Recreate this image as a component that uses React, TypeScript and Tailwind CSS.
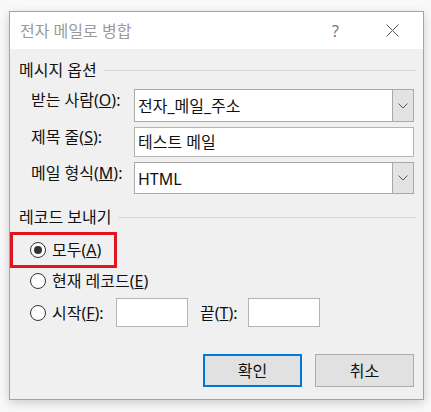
import React from "react";

const U = ({ c }: { c: string }) => <span className="underline underline-offset-[1px] decoration-1">{c}</span>;

const Chevron = () => (
  <svg width="10" height="6" viewBox="0 0 10 6" className="text-[#555]">
    <path d="M0.5 0.5 L5 5 L9.5 0.5" fill="none" stroke="currentColor" strokeWidth="1" />
  </svg>
);

const Radio = ({ checked }: { checked?: boolean }) => (
  <div className="w-[16px] h-[16px] rounded-full border border-[#333] bg-white flex items-center justify-center shrink-0">
    {checked && <div className="w-[8px] h-[8px] rounded-full bg-[#333]" />}
  </div>
);

export default function App() {
  return (
    <div className="w-[431px] h-[412px] bg-[#f9f9f9] pt-[11px] pl-[9px] font-['Noto_Sans','Noto_Sans_CJK_KR',sans-serif] text-[16px] leading-[20px] text-[#111]">
      <div className="w-[415px] h-[389px] border border-[#a3a3a3] shadow-[0_3px_10px_rgba(0,0,0,0.18)] flex flex-col">
        {/* Title bar */}
        <div className="h-[37px] bg-white flex items-center pl-[10px] shrink-0">
          <span className="text-[#9a9a9a]">전자 메일로 병합</span>
          <span className="ml-auto text-[#777] mr-[47px] text-[16px]">?</span>
          <svg width="13" height="13" viewBox="0 0 13 13" className="mr-[24px]">
            <path d="M0.5 0.5 L12.5 12.5 M12.5 0.5 L0.5 12.5" stroke="#555" strokeWidth="1" />
          </svg>
        </div>
        {/* Body */}
        <div className="flex-1 bg-[#f0f0f0] flex flex-col">
          {/* Section 1 header */}
          <div className="mt-[11px] h-[20px] flex items-center pl-[9px] pr-[7px]">
            <span>메시지 옵션</span>
            <div className="flex-1 h-px bg-[#dadada] ml-[7px]" />
          </div>
          {/* Row 1 */}
          <div className="mt-[9px] flex items-start pl-[21px] pr-[9px]">
            <div className="w-[103px] pt-[1px]">
              받는 사람(<U c="O" />):
            </div>
            <div className="flex-1 h-[33px] border border-[#a8a8a8] bg-white flex">
              <div className="flex-1 flex items-center pl-[3px]">전자_메일_주소</div>
              <div className="w-[21px] bg-[#e3e3e3] border-l border-[#a8a8a8] flex items-center justify-center">
                <Chevron />
              </div>
            </div>
          </div>
          {/* Row 2 */}
          <div className="mt-[5px] flex items-start pl-[21px] pr-[9px]">
            <div className="w-[103px] pt-[0px]">
              제목 줄(<U c="S" />):
            </div>
            <div className="flex-1 h-[30px] border border-[#b4b4b4] bg-white flex items-center pl-[3px]">
              테스트 메일
            </div>
          </div>
          {/* Row 3 */}
          <div className="mt-[5px] flex items-start pl-[21px] pr-[9px]">
            <div className="w-[103px] pt-[1px]">
              메일 형식(<U c="M" />):
            </div>
            <div className="flex-1 h-[32px] border border-[#a8a8a8] bg-white flex">
              <div className="flex-1 flex items-center pl-[3px] pt-[2px]">HTML</div>
              <div className="w-[21px] bg-[#e3e3e3] border-l border-[#a8a8a8] flex items-center justify-center">
                <Chevron />
              </div>
            </div>
          </div>
          {/* Section 2 header */}
          <div className="mt-[13px] h-[20px] flex items-center pl-[9px] pr-[7px]">
            <span>레코드 보내기</span>
            <div className="flex-1 h-px bg-[#dadada] ml-[7px]" />
          </div>
          {/* Radio: all (highlighted) */}
          <div className="mt-[5px] w-[107px] h-[36px] border-[3px] border-[#e0161e] flex items-center pl-[17px]">
            <Radio checked />
            <span className="ml-[6px]">
              모두(<U c="A" />)
            </span>
          </div>
          {/* Radio: current record */}
          <div className="mt-[1px] h-[24px] flex items-center pl-[20px]">
            <Radio />
            <span className="ml-[6px]">
              현재 레코드(<U c="E" />)
            </span>
          </div>
          {/* Radio: from/to */}
          <div className="mt-[5px] h-[29px] flex items-center pl-[20px]">
            <Radio />
            <span className="ml-[6px] w-[64px]">
              시작(<U c="F" />):
            </span>
            <div className="w-[72px] h-[29px] border border-[#b4b4b4] bg-white" />
            <span className="ml-[12px] w-[48px]">
              끝(<U c="T" />):
            </span>
            <div className="w-[72px] h-[29px] border border-[#b4b4b4] bg-white" />
          </div>
          {/* Buttons */}
          <div className="mt-[27px] flex justify-end gap-[13px] pr-[9px]">
            <button className="w-[99px] h-[33px] bg-[#e1e1e1] border-2 border-[#0078d7] flex items-center justify-center">
              확인
            </button>
            <button className="w-[99px] h-[33px] bg-[#e1e1e1] border border-[#adadad] flex items-center justify-center">
              취소
            </button>
          </div>
        </div>
      </div>
    </div>
  );
}
